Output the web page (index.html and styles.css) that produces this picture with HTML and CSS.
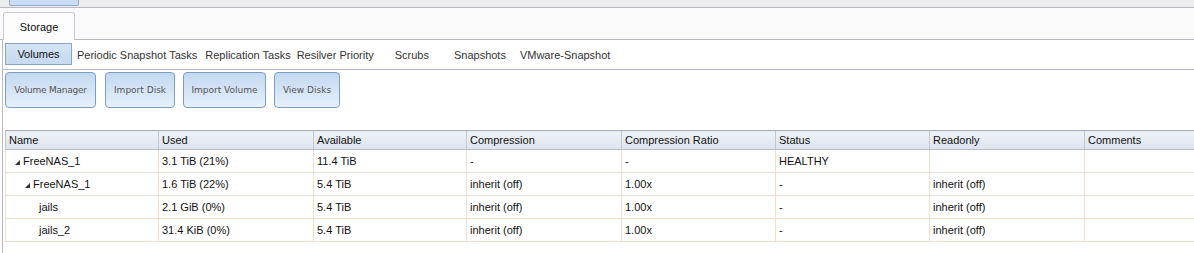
FILE: index.html
```html
<!DOCTYPE html>
<html>
<head>
<meta charset="utf-8">
<link rel="stylesheet" href="styles.css">
</head>
<body>
<div class="topbar">
  <div class="topnav">
    <div class="tn-active"></div>
  </div>
</div>
<div class="tabbar">
  <div class="tab">Storage</div>
</div>
<div class="panel">
  <div class="subtabs">
    <span class="subtab active">Volumes</span>
    <span class="subtab s2">Periodic Snapshot Tasks</span>
    <span class="subtab s3">Replication Tasks</span>
    <span class="subtab s4">Resilver Priority</span>
    <span class="subtab s5">Scrubs</span>
    <span class="subtab s6">Snapshots</span>
    <span class="subtab s7">VMware-Snapshot</span>
  </div>
  <div class="actions">
    <button class="btn b1">Volume Manager</button>
    <button class="btn b2">Import Disk</button>
    <button class="btn b3">Import Volume</button>
    <button class="btn b4">View Disks</button>
  </div>
  <table class="grid">
    <colgroup>
      <col class="c1"><col class="c2"><col class="c3"><col class="c4"><col class="c5"><col class="c6"><col class="c7"><col class="c8">
    </colgroup>
    <thead>
      <tr><th>Name</th><th>Used</th><th>Available</th><th>Compression</th><th>Compression Ratio</th><th>Status</th><th>Readonly</th><th>Comments</th></tr>
    </thead>
    <tbody>
      <tr><td><span class="tw l1"><span class="tri"></span>FreeNAS_1</span></td><td>3.1 TiB (21%)</td><td>11.4 TiB</td><td>-</td><td>-</td><td>HEALTHY</td><td></td><td></td></tr>
      <tr><td><span class="tw l2"><span class="tri"></span>FreeNAS_1</span></td><td>1.6 TiB (22%)</td><td>5.4 TiB</td><td>inherit (off)</td><td>1.00x</td><td>-</td><td>inherit (off)</td><td></td></tr>
      <tr><td><span class="tw l3">jails</span></td><td>2.1 GiB (0%)</td><td>5.4 TiB</td><td>inherit (off)</td><td>1.00x</td><td>-</td><td>inherit (off)</td><td></td></tr>
      <tr><td><span class="tw l3">jails_2</span></td><td>31.4 KiB (0%)</td><td>5.4 TiB</td><td>inherit (off)</td><td>1.00x</td><td>-</td><td>inherit (off)</td><td></td></tr>
    </tbody>
  </table>
</div>
</body>
</html>
```
FILE: styles.css
```css
html, body {
  margin: 0;
  padding: 0;
  background: #ffffff;
  font-family: "Liberation Sans", Arial, sans-serif;
  font-size: 11px;
  color: #222;
  overflow: hidden;
}
.topbar {
  height: 7px;
  background: #eeeeee;
  border-bottom: 1px solid #b9b9c9;
  overflow: hidden;
}
.topnav {
  display: flex;
  padding-left: 9px;
}
.tn-active {
  width: 70px;
  height: 6px;
  background: #c9ddf5;
  border: 1px solid #8fa9c7;
  border-top: none;
  border-radius: 0 0 2px 2px;
  box-sizing: border-box;
}
.tabbar {
  height: 31px;
  background: #fafafa;
  border-bottom: 1px solid #b9b9c9;
  display: flex;
  align-items: flex-end;
  padding-left: 3px;
}
.tab {
  width: 72px;
  height: 28px;
  margin-bottom: -1px;
  background: #fdfdfd;
  border: 1px solid #c8c8d8;
  border-bottom: none;
  border-radius: 3px 3px 0 0;
  box-sizing: border-box;
  text-align: center;
  line-height: 29px;
  font-size: 11px;
  color: #111;
}
.panel {
  margin-left: 2px;
  border-left: 1px solid #b9b9c9;
  height: 220px;
}
.subtabs {
  height: 29px;
  border-bottom: 1px solid #b9b9c9;
  display: flex;
  align-items: center;
  padding-left: 2px;
  color: #333;
}
.subtab {
  white-space: nowrap;
}
.subtab.active {
  width: 67px;
  height: 22px;
  box-sizing: border-box;
  border: 1px solid #86a5c6;
  background: linear-gradient(#d4e4f6, #c6daf0);
  text-align: center;
  line-height: 20px;
  color: #111;
  margin-top: -2px;
}
.s2 { margin-left: 5px; }
.s3 { margin-left: 8px; }
.s4 { margin-left: 6px; }
.s5 { margin-left: 21px; }
.s6 { margin-left: 25px; }
.s7 { margin-left: 14px; }
.actions {
  display: flex;
  gap: 8px;
  padding: 2px 0 0 2px;
}
.btn {
  height: 36px;
  border: 1px solid #7e9ec1;
  border-radius: 4px;
  background: linear-gradient(#c3d9f1, #e6f0fb);
  font-family: "DejaVu Sans", sans-serif;
  font-size: 9px;
  color: #555;
  padding: 0;
  box-sizing: border-box;
}
.b1 { width: 91px; letter-spacing: -0.25px; }
.b2 { width: 70px; margin-left: 1px; }
.b3 { width: 83px; }
.b4 { width: 66px; }
.grid {
  margin-top: 22px;
  margin-left: 2px;
  border-collapse: collapse;
  table-layout: fixed;
  width: 1189px;
}
.c1 { width: 153px; }
.c2 { width: 155px; }
.c3 { width: 153px; }
.c4 { width: 155px; }
.c5 { width: 154px; }
.c6 { width: 154px; }
.c7 { width: 155px; }
.c8 { width: 110px; }
.grid th {
  height: 18px;
  padding: 0 0 0 3px;
  line-height: 13px;
  text-align: left;
  font-weight: normal;
  color: #111;
  background: linear-gradient(#eef2f7, #dde4ee);
  border-top: 1px solid #a6acb8;
  border-bottom: 1px solid #b7bdc8;
  border-left: 1px solid #c2c8d2;
  white-space: nowrap;
}
.grid td {
  height: 22px;
  padding: 0 0 0 3px;
  line-height: 13px;
  border-bottom: 1px solid #efdfcf;
  border-left: 1px solid #efdfcf;
  white-space: nowrap;
  color: #111;
}
.grid thead tr > :first-child { border-left: 1px solid #c2c8d2; }
.tw { display: inline-flex; align-items: center; height: 13px; }
.l1 { padding-left: 6px; }
.l2 { padding-left: 16px; }
.l3 { padding-left: 30px; }
.tri {
  width: 0;
  height: 0;
  border-left: 5px solid transparent;
  border-bottom: 5px solid #333;
  margin-right: 3px;
  margin-top: 2px;
}
```
